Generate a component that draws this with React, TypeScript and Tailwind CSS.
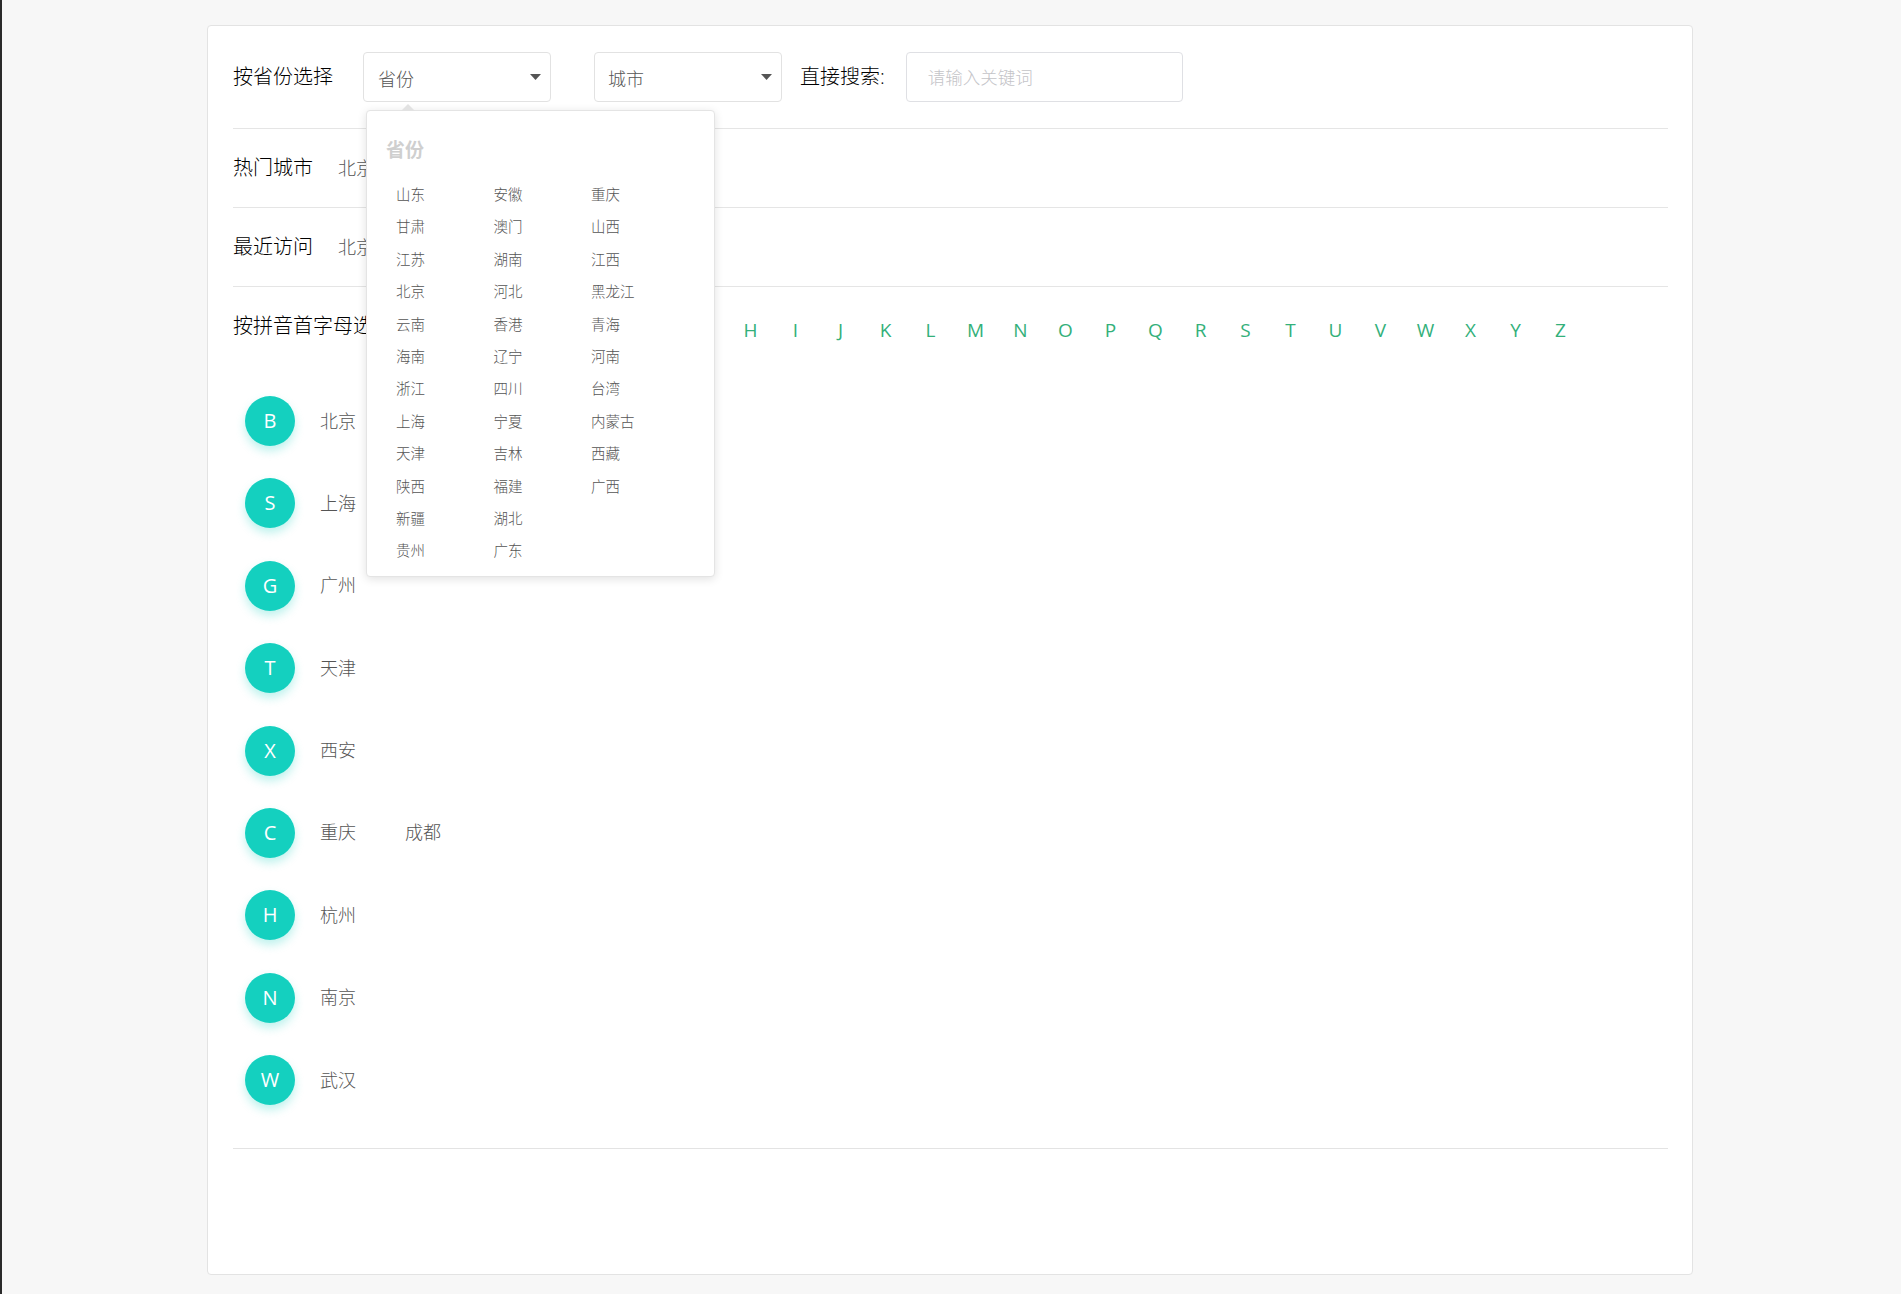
import React from "react";

const PROVINCE_COLS: string[][] = [
  ["山东", "甘肃", "江苏", "北京", "云南", "海南", "浙江", "上海", "天津", "陕西", "新疆", "贵州"],
  ["安徽", "澳门", "湖南", "河北", "香港", "辽宁", "四川", "宁夏", "吉林", "福建", "湖北", "广东"],
  ["重庆", "山西", "江西", "黑龙江", "青海", "河南", "台湾", "内蒙古", "西藏", "广西"],
];

const LETTERS = "ABCDEFGHIJKLMNOPQRSTUVWXYZ".split("");

const GROUPS: { letter: string; cities: string[] }[] = [
  { letter: "B", cities: ["北京"] },
  { letter: "S", cities: ["上海"] },
  { letter: "G", cities: ["广州"] },
  { letter: "T", cities: ["天津"] },
  { letter: "X", cities: ["西安"] },
  { letter: "C", cities: ["重庆", "成都"] },
  { letter: "H", cities: ["杭州"] },
  { letter: "N", cities: ["南京"] },
  { letter: "W", cities: ["武汉"] },
];

function Caret() {
  return (
    <svg width="11" height="6" viewBox="0 0 11 6" className="shrink-0">
      <polygon points="0,0 11,0 5.5,6" fill="#555" />
    </svg>
  );
}

function ProvinceMenu() {
  return (
    <div className="absolute left-[3px] top-[58px] z-10 h-[467px] w-[349px] rounded-[4px] border border-[#e4e4e4] bg-white shadow-[0_2px_10px_rgba(0,0,0,0.12)]">
      {/* arrow */}
      <div className="absolute -top-[7px] left-[34px] h-0 w-0 border-x-[7px] border-b-[7px] border-x-transparent border-b-[#e2e2e2]" />
      <div className="px-[19px] pt-[26px]">
        <div className="h-[26px] text-[19px] font-bold leading-[26px] text-[#cfcfcf]">省份</div>
        <div className="mt-[16px] flex pl-[10px]">
          {PROVINCE_COLS.map((col, i) => (
            <div key={i} className="flex w-[97.5px] flex-col">
              {col.map((p) => (
                <div key={p} className="h-[32.4px] text-[14.5px] font-light leading-[32.4px] text-[#555]">
                  {p}
                </div>
              ))}
            </div>
          ))}
        </div>
      </div>
    </div>
  );
}

export default function App() {
  return (
    <div className="min-h-screen border-l-2 border-[#2a2a2a] bg-[#f7f7f7] pb-[19px] pt-[25px] font-['Open_Sans','Noto_Sans_CJK_SC',sans-serif]">
      <div className="ml-[205px] w-[1486px] rounded-[4px] border border-[#e3e3e3] bg-white pl-[25px] pr-[24px] pb-[125px] pt-[26px]">
        {/* header */}
        <div className="flex h-[50px] items-center">
          <div className="text-[20px] font-light leading-none text-black">按省份选择</div>
          <div className="relative ml-[30px]">
            <div className="flex h-[50px] w-[188px] items-center justify-between rounded-[4px] border border-[#e2e2e2] bg-white pl-[14px] pr-[9px] pt-[4px]">
              <span className="text-[18px] font-light leading-none text-[#555]">省份</span>
              <span className="-mt-[4px]"><Caret /></span>
            </div>
            <ProvinceMenu />
          </div>
          <div className="ml-[43px] flex h-[50px] w-[188px] items-center justify-between rounded-[4px] border border-[#e2e2e2] bg-white pl-[13px] pr-[9px] pt-[4px]">
            <span className="text-[18px] font-light leading-none text-[#555]">城市</span>
            <span className="-mt-[4px]"><Caret /></span>
          </div>
          <div className="ml-[18px] text-[20px] font-light leading-none text-black">直接搜索:</div>
          <input
            className="ml-[21px] h-[50px] w-[277px] rounded-[4px] border border-[#dfe0e4] bg-white pl-[21px] text-[17.5px] font-light text-[#333] outline-none placeholder:text-[#c4c4c8]"
            placeholder="请输入关键词"
          />
        </div>

        <div className="mt-[26px] h-px bg-[#e5e5e5]" />

        <div className="flex h-[78px] items-center">
          <div className="text-[20px] font-light text-black">热门城市</div>
          <div className="ml-[25px] text-[18px] font-light text-[#555]">北京</div>
        </div>
        <div className="h-px bg-[#e5e5e5]" />
        <div className="flex h-[78px] items-center">
          <div className="text-[20px] font-light text-black">最近访问</div>
          <div className="ml-[25px] text-[18px] font-light text-[#555]">北京</div>
        </div>
        <div className="h-px bg-[#e5e5e5]" />

        <div className="flex h-[78px] items-center">
          <div className="text-[20px] font-light text-black">按拼音首字母选择</div>
          <div className="ml-[20px] flex pt-[8px]">
            {LETTERS.map((l) => (
              <span key={l} className="w-[45px] text-center text-[19px] text-[#33b07a]">
                {l}
              </span>
            ))}
          </div>
        </div>

        <div className="flex flex-col gap-[32.4px] pb-[43px] pl-[12px] pt-[31px]">
          {GROUPS.map((g) => (
            <div key={g.letter} className="flex h-[50px] items-center">
              <div className="flex h-[50px] w-[50px] items-center justify-center rounded-full bg-[#14d0bf] text-[20px] text-white shadow-[0_5px_10px_rgba(20,208,191,0.28)]">
                {g.letter}
              </div>
              <div className="ml-[25px] flex gap-[49px]">
                {g.cities.map((c) => (
                  <span key={c} className="text-[18px] font-light text-[#555]">
                    {c}
                  </span>
                ))}
              </div>
            </div>
          ))}
        </div>

        <div className="h-px bg-[#e3e3e3]" />
      </div>
    </div>
  );
}
